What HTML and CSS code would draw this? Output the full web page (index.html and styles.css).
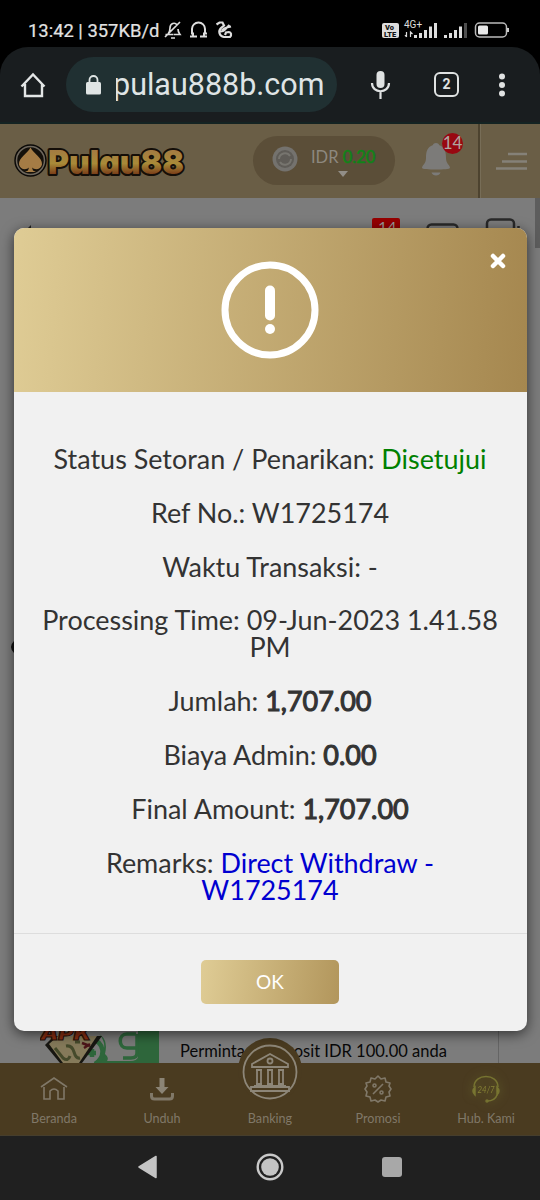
FILE: index.html
```html
<!DOCTYPE html>
<html lang="id">
<head>
<meta charset="utf-8">
<title>Pulau88</title>
<link rel="stylesheet" href="styles.css">
</head>
<body>
<div class="phone">
  <div class="status">
    <span class="clock">13:42 | 357KB/d</span>
    <svg class="status-left" width="74" height="24" viewBox="164 18 74 24" fill="none" stroke="#ddd" stroke-width="1.7">
      <path d="M165.500 34.500h8M168 34c2-2 2-4 2-6 0-5 5-6 7-3M178 29c0 3 1 4 2 5.500h-6M165 37l15-15M171 38h4"/>
      <path d="M190 36.500h3v-3h-2M192 33v-4a6.500 6.500 0 0 1 13 0v4M207 33.500h-3v3h3M193 36.500h4M200 36.500h4" stroke-width="2"/>
      <path d="M216.500 24.500l3-2h3l1.500 3-3 2.500c-3 3-2 8 3 9h6c2-2 1-5-1-5l-3 .5-1 2.500M222 30.500c2-3 5-3 9-4M225.500 29l4-4M220.500 31.500c2 0 4-1 5-2.500" stroke-width="2.200"/>
    </svg>
    <svg class="status-right" width="130" height="24" viewBox="380 18 130 24">
      <rect x="382" y="23" width="17" height="15" rx="2" fill="#ddd"/>
      <text x="385" y="30" class="tiny dark">Vo</text><text x="384" y="37" class="tiny dark">LTE</text>
      <text x="404" y="28" class="net">4G+</text>
      <path d="M406.500 32v5M405 35l1.500 2M410.500 37v-5l2 2" fill="none" stroke="#ddd" stroke-width="1.200"/>
      <g fill="#ddd"><path d="M414 35h3v3h-3zM419 33h3v5h-3zM424 30h3v8h-3zM429 26.500h3v11.500h-3zM434 23h3v15h-3zM444 35h3v3h-3zM449 33h3v5h-3zM454 30h3v8h-3zM459 26.500h3v11.500h-3z"/><path d="M464 23h3v15h-3z" opacity=".35"/></g>
      <rect x="475.500" y="23" width="31" height="14" rx="4" fill="none" stroke="#bbb" stroke-width="1.500"/>
      <rect x="478" y="25.500" width="10" height="9" rx="1.500" fill="#e8e8e8"/><path d="M508 28v4" stroke="#ccc" stroke-width="2"/>
    </svg>
  </div>
  <div class="toolbar-wrap">
  <div class="toolbar">
    <svg class="home" width="26" height="28" viewBox="20 71 26 28" fill="none" stroke="#e3e6e6" stroke-width="2.400"><path d="M21.500 86.500 33 74.500l11.500 12M25 84v12h17V84"/></svg>
    <div class="url">
      <svg width="16" height="20" viewBox="0 0 16 20"><rect y="7" width="15" height="12.500" rx="1.500" fill="#dfe4e4"/><path d="M3.500 8V5a4 4 0 0 1 8 0v3" fill="none" stroke="#dfe4e4" stroke-width="1.800"/></svg>
      <span class="host">pulau888b.com</span>
    </div>
    <svg class="mic" width="22" height="30" viewBox="370 70 22 30"><rect x="376.500" y="71" width="8" height="17" rx="4" fill="#dfe2e2"/><path d="M372 83c0 11 17 11 17 0M380.500 91v8" fill="none" stroke="#dfe2e2" stroke-width="2.200"/></svg>
    <span class="tabs">2</span>
    <svg class="dots" width="8" height="24" viewBox="0 0 8 24" fill="#e0e2e2"><circle cx="4" cy="3.500" r="3"/><circle cx="4" cy="12" r="3"/><circle cx="4" cy="20.500" r="3"/></svg>
  </div>
  </div>
  <main class="site">
    <header class="site-header">
      <svg class="logo" width="176" height="42" viewBox="12 140 176 42">
        <defs><linearGradient id="gold" x1="0" y1="0" x2="0" y2="1"><stop offset=".2" stop-color="#a37a42"/><stop offset=".55" stop-color="#a88a38"/><stop offset=".8" stop-color="#7d431b"/></linearGradient></defs>
        <circle cx="30.500" cy="160.500" r="15.500" fill="#15110b" stroke="#0b0907" stroke-width="1.500"/>
        <circle cx="30.500" cy="160.500" r="14" fill="none" stroke="#6d675d" stroke-width="1.500"/>
        <path d="M30.500 147.500c3 6 12 10 11.500 17-1 5-7 6-10 3l1 3 3 1.500H25l3-1.500 1-3c-3 3-9 2-10-3-.500-7 8.500-11 11.500-17z" fill="#a57c45"/>
        <text class="logo-text" x="48" y="173.500" textLength="136" lengthAdjust="spacingAndGlyphs">Pulau88</text>
      </svg>
      <div class="balance">
        <svg width="28" height="28" viewBox="0 0 28 28"><circle cx="14" cy="14" r="12.500" fill="#74726e"/><circle cx="14" cy="14" r="9" fill="#5f5c57"/><path d="M8 14a6 6 0 0 1 11-3M20 14a6 6 0 0 1-11 3" fill="none" stroke="#77756f" stroke-width="2"/></svg>
        <div class="amount"><span>IDR <b>0.20</b></span><svg width="10" height="6" viewBox="0 0 10 6"><path d="M0 0h10L5 6z" fill="#928e87"/></svg></div>
      </div>
      <div class="bell">
        <svg width="28" height="34" viewBox="422 142 28 34" fill="#7c7b79"><path d="M436 143c2 0 3 1 3 2 6 2 7 7 7 13 0 6 4 7 4 10 0 2-28 2-28 0 0-3 4-4 4-10s1-11 7-13c0-1 1-2 3-2zM431.500 172.500h9c-1 4-8 4-9 0z"/></svg>
        <span class="badge">14</span>
      </div>
      <div class="menu"><svg width="31" height="20" viewBox="0 0 31 20" stroke="#858178" stroke-width="2.500"><path d="M12 3h19M6 10.500h25M0 17.500h31"/></svg></div>
    </header>
    <section class="page">
      <svg class="peek" width="540" height="32" viewBox="0 198 540 32">
        <path d="M535 198h5v50h-5z" fill="#5d5d5d"/><path d="M27 229l4-4v5zM150 230v-2h7v2z" fill="#222"/>
        <rect x="372" y="218" width="28" height="20" rx="2" fill="#960000"/><text x="378" y="233" class="peek-count">14</text>
        <g fill="none" stroke="#292929" stroke-width="2.500"><rect x="427.500" y="224.500" width="30" height="20" rx="4"/><rect x="487" y="219.500" width="27" height="20" rx="4"/><path d="M518.500 226v3"/></g>
      </svg>
      <svg class="left-arrow" width="14" height="20" viewBox="0 0 14 20"><path d="M15 3q-8 7 0 14z" fill="#111"/></svg>
      <div class="promo">
        <svg width="119" height="45" viewBox="40 1018 119 45">
          <path d="M40 1018h119v45H40z" fill="#7a7a79"/><path d="M104 1018h55v45H94c14-12 12-21 4-31z" fill="#2e663b"/>
          <path d="M101 1018h37v39q-1 4-8 4h-23c2-3 0-5-2-7q4-16-9-22z" fill="#7a7a79"/>
          <path d="M136 1034h-9c-9 0-9 14 0 14h10v-14M137 1046v7q0 5-6 5h-8" fill="none" stroke="#2e663b" stroke-width="3.500"/>
          <path d="M91 1039c14 3 15 18 4 25M88 1053h8M92 1049v8" fill="none" stroke="#2e663b" stroke-width="4.500"/>
          <path d="M45 1045l9-9h48l-20 27H60z" fill="#171611"/><path d="M49 1044l9-8h39l-18 27H63z" fill="#857a5a"/><path d="M55 1048l8 10q5 4 7-2M66 1046q6-1 8 6t6 6M75 1042h5" stroke="#454a2b" stroke-width="3" fill="none"/><path d="M82 1043l8 3M84 1048l6-4" stroke="#4c1519" stroke-width="2.500"/>
          <text x="40" y="1040" class="apk" textLength="51" lengthAdjust="spacingAndGlyphs">APK</text>
        </svg>
        <div class="promo-copy"><span class="promo-title">Depo p Hanya j</span><span>Permintaan deposit IDR 100.00 anda</span></div>
      </div>
    </section>
    <nav class="bottom-nav">
      <a class="tab"><svg width="28" height="28" viewBox="0 0 28 28" fill="none" stroke="#807868" stroke-width="1.600"><path d="M1 12 14 3l13 9M4 12v12h6v-8q4-4 8 0v8h6V12"/></svg><span>Beranda</span></a>
      <a class="tab"><svg width="28" height="28" viewBox="0 0 28 28"><path d="M11.500 3h5v9h4L14 19l-6.500-7h4z" fill="#8b8475"/><path d="M3.500 18v3q0 3 3 3h15q3 0 3-3v-3" fill="none" stroke="#807868" stroke-width="3"/></svg><span>Unduh</span></a>
      <a class="tab bank"><span class="coin"><svg width="64" height="64" viewBox="0 0 64 64" fill="none" stroke="#8d8678" stroke-width="1.800"><circle cx="32" cy="32" r="26.500"/><path d="M14 24 32 14l18 10v3H14zM16 27h32M16 46h32M13 47h38v4H13zM18 30h6M18 44h6M19 30v14M23 30v14M29 30h6M29 44h6M30 30v14M34 30v14M40 30h6M40 44h6M41 30v14M45 30v14"/><circle cx="32" cy="21" r="2.500"/></svg></span><span>Banking</span></a>
      <a class="tab"><svg width="28" height="28" viewBox="0 0 28 28" fill="none" stroke="#807868" stroke-width="1.600" stroke-linejoin="round"><path d="M14 1l3 3 4-1 1 4 4 1-1 3 2 3-2 3 1 4-4 1-1 4-4-1-3 2-3-2-4 1-1-4-4-1 1-4-2-3 2-3-1-3 4-1 1-4 4 1zM9 19 19 9"/><circle cx="10.500" cy="10.500" r="1.500"/><circle cx="17.500" cy="17.500" r="1.500"/></svg><span>Promosi</span></a>
      <a class="tab"><svg class="support" width="28" height="28" viewBox="0 0 28 28" fill="none" stroke="#777431" stroke-width="1.500"><path d="M2 12C2-2 26-2 26 12M25 20q-2 6-10 6"/><path d="M3 12q-4 4 0 8zM25 12q4 4 0 8z" fill="#858034"/><circle cx="15" cy="26" r="1"/><text x="5.500" y="18" class="hours" textLength="17" lengthAdjust="spacingAndGlyphs">24/7</text></svg><span>Hub. Kami</span></a>
    </nav>
    <div class="modal" role="dialog">
      <div class="modal-head">
        <svg class="alert" width="98" height="98" viewBox="0 0 98 98"><circle cx="49" cy="49" r="45" fill="none" stroke="#fff" stroke-width="7"/><rect x="44" y="24.500" width="10" height="35" rx="5" fill="#fff"/><circle cx="49" cy="68" r="5" fill="#fff"/></svg>
        <svg class="close" width="16" height="16" viewBox="0 0 16 16"><path d="M3 3l10 10M13 3 3 13" stroke="#fff" stroke-width="4.500" stroke-linecap="round"/></svg>
      </div>
      <div class="modal-body">
        <p>Status Setoran / Penarikan: <span class="ok-text">Disetujui</span></p>
        <p>Ref No.: W1725174</p>
        <p>Waktu Transaksi: -</p>
        <p>Processing Time: 09-Jun-2023 1.41.58 PM</p>
        <p>Jumlah: <b>1,707.00</b></p>
        <p>Biaya Admin: <b>0.00</b></p>
        <p>Final Amount: <b>1,707.00</b></p>
        <p>Remarks: <span class="remark">Direct Withdraw -<br>W1725174</span></p>
      </div>
      <div class="modal-foot"><button class="ok">OK</button></div>
    </div>
  </main>
  <div class="android">
    <svg width="20" height="24" viewBox="0 0 20 24"><path d="M1 12 18 1.500v21z" fill="#c4c4c4" stroke="#c4c4c4" stroke-width="1.500" stroke-linejoin="round"/></svg>
    <svg width="28" height="28" viewBox="0 0 28 28"><circle cx="14" cy="14" r="12.300" fill="none" stroke="#c9c9c9" stroke-width="2.400"/><circle cx="14" cy="14" r="8.800" fill="#c4c4c4"/></svg>
    <svg width="20" height="20" viewBox="0 0 20 20"><rect width="20" height="20" rx="3" fill="#a8a8a8"/></svg>
  </div>
</div>
</body>
</html>
```
FILE: styles.css
```css
* { box-sizing: border-box; }
body { margin: 0; background: #000; font-family: Lato, sans-serif; }
svg { display: block; flex: none; }
.phone { width: 540px; height: 1200px; display: flex; flex-direction: column; overflow: hidden; }
.status { height: 47px; flex: none; display: flex; align-items: center; padding: 13px 30px 0 28px; background: #000; color: #e2e2e2; font-family: Roboto, sans-serif; }
.clock { width: 136px; white-space: nowrap; font-size: 18.400px; -webkit-text-stroke: .2px #e2e2e2; }
.status-right { margin-left: auto; }
.tiny { font: 900 7.500px Roboto, sans-serif; fill: #111; }
.net { font: 400 10px Roboto, sans-serif; fill: #ddd; }
.toolbar-wrap { height: 77px; flex: none; background: #000; }
.toolbar { height: 77px; display: flex; align-items: center; padding: 0 34px 0 20px; background: #191d1f; border-radius: 28px 28px 0 0; border-bottom: 2px solid #142322; }
.url { width: 271px; height: 55px; margin-left: 20px; padding-left: 20px; border-radius: 28px; background: #203032; display: flex; align-items: center; }
.host { margin-left: 11px; color: #dfe4e5; font: 30.500px/40px Roboto, sans-serif; white-space: nowrap; clip-path: inset(0 0 0 3px); }
.mic { margin-left: 33px; }
.tabs { width: 25px; height: 25px; margin-left: 42px; border: 2.500px solid #dfe2e2; border-radius: 6px; color: #dfe2e2; font: 700 14px/20px Roboto, sans-serif; text-align: center; }
.dots { margin-left: auto; }
.site { height: 1012px; flex: none; display: flex; flex-direction: column; position: relative; background: #7c7c7c; }
.site-header { height: 74px; flex: none; display: flex; background: #6a5e46; }
.logo { margin: 16px 0 0 12px; }
.logo-text { font: 900 33px Inter, sans-serif; font-feature-settings: "cv11"; fill: url(#gold); stroke: #140e08; stroke-width: 4px; stroke-linejoin: round; paint-order: stroke; }
.balance { width: 142px; height: 49px; margin: 12px 0 0 65px; padding-left: 18px; border-radius: 25px; background: #5b4e38; display: flex; align-items: center; }
.balance > svg { margin-top: -3px; }
.amount { margin-left: 12px; padding-top: 3px; display: flex; flex-direction: column; align-items: center; gap: 4px; color: #8d887f; font-size: 16.500px; line-height: 20px; white-space: nowrap; }
.amount b { color: #128219; font-weight: 400; -webkit-text-stroke: .6px #128219; }
.bell { width: 56px; margin: 18px 0 0 27px; position: relative; }
.badge { position: absolute; left: 20px; top: -9px; width: 21px; height: 21px; border-radius: 50%; background: #980811; color: #b0a6a1; font-size: 17px; line-height: 20px; text-align: center; }
.menu { flex: 1; border-left: 2px solid #4d432f; box-shadow: inset 1px 0 #776d57; padding: 27px 0 0 16px; }
.page { flex: 1; display: flex; flex-direction: column; justify-content: space-between; }
.peek { overflow: visible; }
.left-arrow { position: absolute; left: 0; top: 513px; }
.promo { height: 45px; margin: 0 41px 0 40px; display: flex; border-right: 1px solid #656565; color: #080808; }
.promo-copy { padding-left: 21px; display: flex; flex-direction: column; font-size: 16.500px; line-height: 24px; white-space: nowrap; }
.promo-title { font-size: 19px; font-weight: 700; height: 30px; line-height: 20px; margin-top: -7px; }
.peek-count { font: 16px Lato, sans-serif; fill: #999; }
.apk { font: italic 900 19px Inter, sans-serif; fill: #8b2f12; stroke: #291008; stroke-width: 1px; }
.bottom-nav { height: 73px; flex: none; display: flex; background: #4a3b20; border-bottom: 1px solid #463e2d; }
.tab { width: 108px; height: 73px; padding-top: 12px; display: flex; flex-direction: column; align-items: center; gap: 8px; color: #807868; font-size: 12.600px; line-height: 16px; position: relative; }
.bank { padding-top: 48px; }
.coin { position: absolute; top: -25px; left: 22px; width: 64px; height: 64px; border-radius: 50%; background: #4a3b20; }
.coin svg { margin-top: 2px; }
.support { filter: drop-shadow(0 0 5px #65652c); }
.hours { font: italic 9px Lato, sans-serif; fill: #858034; stroke: none; }
.modal { position: absolute; left: 14px; top: 104px; width: 513px; height: 803px; border-radius: 10px; overflow: hidden; background: #f1f1f1; box-shadow: 0 3px 13px rgba(0,0,0,.6); display: flex; flex-direction: column; }
.modal-head { height: 164px; flex: none; display: flex; align-items: center; justify-content: center; background: linear-gradient(94deg, #dfcc95, #a5874f); position: relative; }
.alert { margin: 0 1px 1px 0; }
.close { position: absolute; right: 21px; top: 25px; }
.modal-body { flex: 1; padding: 53px 26px 0 25px; text-align: center; color: #333; font-size: 26.950px; line-height: 27px; }
.modal-body p { margin: 0 0 26.800px; }
.modal-body b { font-weight: 400; -webkit-text-stroke: 1.100px #333; }
.ok-text { color: #008000; }
.remark { color: #0000d0; }
.modal-foot { height: 98px; flex: none; border-top: 1px solid #ddd; padding: 26px 1px 0 0; display: flex; justify-content: center; }
.ok { width: 138px; height: 44px; border: 0; border-radius: 5px; padding: 0 0 2px; background: linear-gradient(97deg, #dfcc95, #b2965c); color: #fff; font: 19px Lato, sans-serif; }
.android { height: 64px; flex: none; display: flex; align-items: center; gap: 98px; padding: 0 0 2px 138px; background: #202020; }
```
